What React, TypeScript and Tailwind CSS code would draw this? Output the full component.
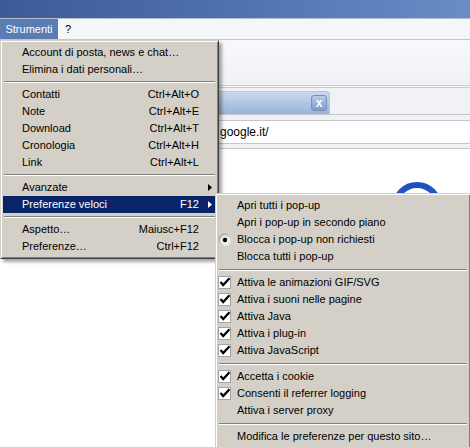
import React from "react";

type Item =
  | { kind: "sep" }
  | {
      kind: "item";
      label: string;
      shortcut?: string;
      arrow?: boolean;
      active?: boolean;
      mark?: "check" | "radio";
    };

const MAIN: Item[] = [
  { kind: "item", label: "Account di posta, news e chat…" },
  { kind: "item", label: "Elimina i dati personali…" },
  { kind: "sep" },
  { kind: "item", label: "Contatti", shortcut: "Ctrl+Alt+O" },
  { kind: "item", label: "Note", shortcut: "Ctrl+Alt+E" },
  { kind: "item", label: "Download", shortcut: "Ctrl+Alt+T" },
  { kind: "item", label: "Cronologia", shortcut: "Ctrl+Alt+H" },
  { kind: "item", label: "Link", shortcut: "Ctrl+Alt+L" },
  { kind: "sep" },
  { kind: "item", label: "Avanzate", arrow: true },
  { kind: "item", label: "Preferenze veloci", shortcut: "F12", arrow: true, active: true },
  { kind: "sep" },
  { kind: "item", label: "Aspetto…", shortcut: "Maiusc+F12" },
  { kind: "item", label: "Preferenze…", shortcut: "Ctrl+F12" },
];

const QUICK: Item[] = [
  { kind: "item", label: "Apri tutti i pop-up" },
  { kind: "item", label: "Apri i pop-up in secondo piano" },
  { kind: "item", label: "Blocca i pop-up non richiesti", mark: "radio" },
  { kind: "item", label: "Blocca tutti i pop-up" },
  { kind: "sep" },
  { kind: "item", label: "Attiva le animazioni GIF/SVG", mark: "check" },
  { kind: "item", label: "Attiva i suoni nelle pagine", mark: "check" },
  { kind: "item", label: "Attiva Java", mark: "check" },
  { kind: "item", label: "Attiva i plug-in", mark: "check" },
  { kind: "item", label: "Attiva JavaScript", mark: "check" },
  { kind: "sep" },
  { kind: "item", label: "Accetta i cookie", mark: "check" },
  { kind: "item", label: "Consenti il referrer logging", mark: "check" },
  { kind: "item", label: "Attiva i server proxy" },
  { kind: "sep" },
  { kind: "item", label: "Modifica le preferenze per questo sito…" },
];

const FRAME =
  "bg-[#d4d0c8] border border-t-[#d4d0c8] border-l-[#d4d0c8] border-r-[#404040] border-b-[#404040] shadow-[inset_1px_1px_0_#ffffff,inset_-1px_-1px_0_#808080,3px_3px_3px_rgba(0,0,0,0.35)]";

function Arrow({ white }: { white?: boolean }) {
  return (
    <svg width="4" height="7" viewBox="0 0 4 7">
      <path d="M0 0 L4 3.5 L0 7 Z" fill={white ? "#ffffff" : "#000000"} />
    </svg>
  );
}

function Check() {
  return (
    <svg width="13" height="13" viewBox="0 0 13 13">
      <rect x="0.5" y="0.5" width="12" height="12" fill="#ffffff" stroke="#a4a4a4" />
      <path
        d="M2.5 6 L5.2 9 L11.5 2.2"
        fill="none"
        stroke="#000000"
        strokeWidth="2.2"
        strokeLinejoin="miter"
      />
    </svg>
  );
}

function Radio() {
  return (
    <svg width="14" height="14" viewBox="0 0 14 14">
      <defs>
        <linearGradient id="rb" x1="0" y1="0" x2="1" y2="1">
          <stop offset="0%" stopColor="#8a8a8a" />
          <stop offset="100%" stopColor="#ffffff" />
        </linearGradient>
        <radialGradient id="rf" cx="0.6" cy="0.6" r="0.6">
          <stop offset="0%" stopColor="#ffffff" />
          <stop offset="100%" stopColor="#dcdcdc" />
        </radialGradient>
      </defs>
      <circle cx="7" cy="7" r="6.5" fill="url(#rb)" />
      <circle cx="7" cy="7" r="5.3" fill="url(#rf)" />
      <circle cx="7" cy="7" r="2.2" fill="#000000" />
    </svg>
  );
}

function Sep({ tall }: { tall?: boolean }) {
  return (
    <div className={`flex items-center px-px ${tall ? "h-[9px]" : "h-[8px]"}`}>
      <div className="h-[2px] w-full border-t border-t-[#808080] border-b border-b-white" />
    </div>
  );
}

export default function App() {
  return (
    <div className="relative h-[447px] w-[470px] overflow-hidden bg-white font-['Liberation_Sans',Arial,sans-serif] text-[11px] text-black">
      {/* window chrome */}
      <div className="h-[18px] bg-gradient-to-r from-[#3b5a99] via-[#5072ae] to-[#6b8dc6]" />
      <div className="flex h-[22px] items-stretch border-t border-t-[#b8bcc8] border-b border-b-[#c4c6cc] bg-[#f5f6f8]">
        <div className="flex w-[58px] items-center justify-center bg-[#5a7cb4] text-white">
          Strumenti
        </div>
        <div className="flex items-center pl-[7px]">?</div>
      </div>
      <div className="h-[48px] border-b-[3px] border-double border-b-[#c8cacf] bg-gradient-to-b from-[#f8f9fb] to-[#eff1f5]" />
      <div className="flex h-[32px] flex-col bg-[#f1f2f5]">
        <div className="mt-[3px] flex h-[23px] w-[330px] items-center justify-end rounded-tr-[4px] border border-b-0 border-[#c0c4cc] bg-gradient-to-b from-[#cad9ee] to-[#98b3da] pr-[2px]">
          <div className="flex h-[16px] w-[16px] items-center justify-center rounded-[3px] border border-[#7590bc] bg-gradient-to-b from-[#b8cbe8] to-[#7d9ccc] text-[12px] font-bold leading-none text-white">
            x
          </div>
        </div>
        <div className="flex-1 border-t border-[#c4c6cc]" />
      </div>
      <div className="border-y border-[#c4c6cc] bg-[#f1f2f5]">
        <div className="flex h-[22px] items-center bg-white pl-[220px] text-[12px]">google.it/</div>
      </div>
      <div className="h-[5px] border-b border-[#c4c6cc] bg-[#f1f2f5]" />
      <div className="pl-[391px] pt-[32px]">
        <svg width="52" height="52" viewBox="0 0 52 52">
          <defs>
            <linearGradient id="ring" x1="0" y1="0" x2="0" y2="1">
              <stop offset="0%" stopColor="#1e4fc2" />
              <stop offset="100%" stopColor="#4a7ae0" />
            </linearGradient>
          </defs>
          <circle cx="26" cy="26" r="22" fill="#ffffff" stroke="url(#ring)" strokeWidth="6" />
        </svg>
      </div>

      {/* Strumenti menu */}
      <div className={`absolute left-0 top-[40px] w-[219px] py-[3px] pl-[2px] pr-[2px] ${FRAME}`}>
        {MAIN.map((it, i) =>
          it.kind === "sep" ? (
            <Sep key={i} />
          ) : (
            <div
              key={i}
              className={`flex h-[17px] items-center pl-[19px] ${
                it.active ? "bg-[#0a246a] text-white" : ""
              }`}
            >
              <span className="flex-1 whitespace-nowrap">{it.label}</span>
              {it.shortcut && <span className="whitespace-nowrap">{it.shortcut}</span>}
              <span className="flex w-[17px] items-center pl-[9px]">
                {it.arrow && <Arrow white={it.active} />}
              </span>
            </div>
          )
        )}
      </div>

      {/* Preferenze veloci submenu */}
      <div className={`absolute left-[215px] top-[193px] w-[256px] py-[3px] pl-[2px] pr-[2px] ${FRAME}`}>
        {QUICK.map((it, i) =>
          it.kind === "sep" ? (
            <Sep key={i} tall />
          ) : (
            <div key={i} className="flex h-[17px] items-center">
              <span className="flex w-[19px] items-center">
                {it.mark === "check" && <Check />}
                {it.mark === "radio" && <Radio />}
              </span>
              <span className="whitespace-nowrap">{it.label}</span>
            </div>
          )
        )}
      </div>
    </div>
  );
}
